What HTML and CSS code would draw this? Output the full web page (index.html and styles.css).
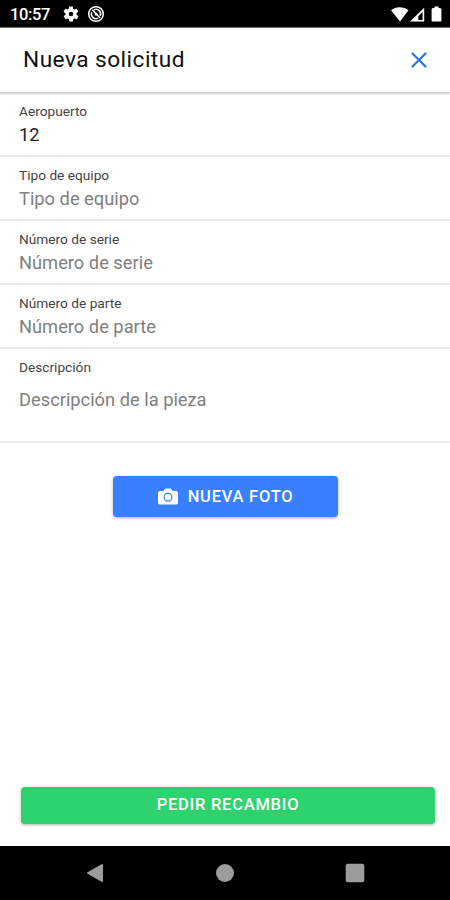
FILE: index.html
```
<!DOCTYPE html>
<html lang="es">
<head>
    <meta charset="UTF-8">
    <meta name="viewport" content="width=device-width, initial-scale=1.0">
    <title>Nueva solicitud</title>
    <link rel="stylesheet" href="styles.css">
</head>
<body>
    <div class="status-bar">
        <span class="clock">10:57</span>
        <svg class="gear" width="18" height="18" viewBox="0 0 24 24">
            <path fill="#fff" fill-rule="evenodd" d="M19.4 13a7.500 7.500 0 0 0 0-2l2.100-1.600a.5.5 0 0 0 .1-.6l-2-3.500a.5.5 0 0 0-.6-.2l-2.500 1a7.300 7.300 0 0 0-1.700-1l-.4-2.600a.5.5 0 0 0-.5-.5h-4a.5.5 0 0 0-.5.5l-.4 2.600a7.300 7.300 0 0 0-1.700 1l-2.500-1a.5.5 0 0 0-.6.200l-2 3.500a.5.5 0 0 0 .1.600L4.600 11a7.500 7.500 0 0 0 0 2l-2.100 1.600a.5.5 0 0 0-.1.600l2 3.500c.1.200.4.300.6.200l2.500-1a7.300 7.300 0 0 0 1.700 1l.4 2.600c0 .3.200.5.5.5h4c.3 0 .5-.2.5-.5l.4-2.600a7.300 7.300 0 0 0 1.700-1l2.500 1c.2.100.5 0 .6-.2l2-3.500a.5.5 0 0 0-.1-.6zM12 15a3 3 0 1 1 0-6 3 3 0 0 1 0 6z"/>
        </svg>
        <svg class="sync" width="18" height="18" viewBox="0 0 18 18" fill="none" stroke="#fff">
            <circle cx="9" cy="9" r="7.300" stroke-width="1.500"/>
            <path stroke-width="1.500" d="M5.200 4.800l8 8.200M6.900 4.900a4.600 4.600 0 0 1 6.300 6M4.700 7.300a4.600 4.600 0 0 0 6.300 5.800"/>
            <circle cx="9" cy="9" r="1.500" fill="#fff" stroke="none"/>
        </svg>
        <svg class="signals" width="54" height="18" viewBox="0 0 54 18">
            <path fill="#fff" d="M1 5.200C5.500 1.300 13.500 1.300 18.500 5.200L10 16.500z"/>
            <path fill="#fff" fill-rule="evenodd" d="M20 16.500L34.200 2.800v13.700zM28.300 11.200v3.900h4.300V6.800z"/>
            <path fill="#fff" d="M44.500 3V1.500h4V3h1.400q1.500 0 1.500 1.500v11q0 1-1 1h-7.800q-1 0-1-1v-11Q41.600 3 43.100 3z"/>
        </svg>
    </div>

    <header class="header">
        <h1>Nueva solicitud</h1>
        <button class="close" aria-label="Cerrar">
            <svg width="16" height="16" viewBox="0 0 16 16">
                <path d="M1.500 1.500l13 13M14.500 1.500l-13 13" stroke="#2b74f0" stroke-width="2.200" stroke-linecap="round"/>
            </svg>
        </button>
    </header>

    <main>
        <div class="item">
            <label for="aeropuerto">Aeropuerto</label>
            <input id="aeropuerto" type="text" value="12">
        </div>
        <div class="item">
            <label for="tipo">Tipo de equipo</label>
            <input id="tipo" type="text" placeholder="Tipo de equipo">
        </div>
        <div class="item">
            <label for="serie">Número de serie</label>
            <input id="serie" type="text" placeholder="Número de serie">
        </div>
        <div class="item">
            <label for="parte">Número de parte</label>
            <input id="parte" type="text" placeholder="Número de parte">
        </div>
        <div class="item item-area">
            <label for="descripcion">Descripción</label>
            <textarea id="descripcion" placeholder="Descripción de la pieza"></textarea>
        </div>
        <button class="btn photo">
            <svg width="20" height="17" viewBox="0 0 20 17">
                <path fill="#fff" d="M2 2.900h3.300L6.900.9Q7.300.4 8 .4h4.200q.6 0 1 .5l1.600 2H18q2 0 2 2v9.700q0 2-2 2H2q-2 0-2-2V4.900q0-2 2-2z"/>
                <circle cx="10" cy="9.200" r="3.900" fill="none" stroke="#3880ff" stroke-width="1.200"/>
            </svg>
            <span>NUEVA FOTO</span>
        </button>
    </main>

    <footer class="footer">
        <button class="btn send">PEDIR RECAMBIO</button>
    </footer>

    <nav class="nav-bar">
        <svg width="20" height="20" viewBox="0 0 20 20"><path fill="#9c9c9c" stroke="#9c9c9c" stroke-width="2" stroke-linejoin="round" d="M17 2v16L3 10z"/></svg>
        <svg width="20" height="20" viewBox="0 0 20 20"><circle cx="10" cy="10" r="9" fill="#9c9c9c"/></svg>
        <svg width="20" height="20" viewBox="0 0 20 20"><rect x=".7" y=".7" width="18.600" height="18.600" rx="2" fill="#9c9c9c"/></svg>
    </nav>
</body>
</html>
```
FILE: styles.css
```
* {
    box-sizing: border-box;
    margin: 0;
    padding: 0;
}

body {
    display: flex;
    flex-direction: column;
    height: 900px;
    font-family: Roboto, sans-serif;
    background-color: #fff;
    color: #111;
    overflow: hidden;
}

button {
    border: none;
    font-family: inherit;
    cursor: pointer;
}

.status-bar {
    display: flex;
    align-items: center;
    height: 28px;
    padding: 1px 6px 0 10px;
    background-color: #000;
    color: #fff;
    border-bottom: 1px solid #777;
}

.clock {
    width: 52px;
    font-size: 16.500px;
    font-weight: 500;
    letter-spacing: -0.4px;
}

.sync {
    margin-left: 7px;
}

.signals {
    margin-left: auto;
}

.header {
    display: flex;
    align-items: center;
    justify-content: space-between;
    height: 64px;
    padding: 0 22px 0 23px;
    box-shadow: 0 1px 2px 1px rgba(0, 0, 0, 0.2);
}

h1 {
    font-size: 22.700px;
    font-weight: 400;
    line-height: 26px;
    letter-spacing: 0.450px;
    margin-top: -1px;
}

.close {
    display: flex;
    padding: 1px;
    background: none;
}

main {
    flex: 1;
    padding-top: 1px;
}

.item {
    display: flex;
    flex-direction: column;
    height: 64px;
    padding: 10px 19px 0;
    border-bottom: 2px solid #ebebeb;
}

.item-area {
    height: 94px;
}

label {
    font-size: 13.700px;
    line-height: 16px;
    color: #444;
}

input,
textarea {
    width: 100%;
    border: none;
    outline: none;
    resize: none;
    background: none;
    font-family: inherit;
    font-size: 18.300px;
    line-height: 24px;
    height: 24px;
    margin-top: 4px;
    color: #222;
}

textarea {
    height: 50px;
    margin-top: 13px;
}

::placeholder {
    color: #808080;
}

.btn {
    display: flex;
    align-items: center;
    justify-content: center;
    border-radius: 4px;
    color: #fff;
    font-size: 16.500px;
    font-weight: 500;
    letter-spacing: 0.750px;
    box-shadow: 0 1px 3px rgba(0, 0, 0, 0.32);
}

.photo {
    gap: 10px;
    width: 225px;
    height: 41px;
    margin: 33px auto 0 113px;
    background-color: #3880ff;
}

.footer {
    padding: 0 15px 22px 21px;
}

.send {
    width: 100%;
    height: 37px;
    padding-bottom: 2px;
    background-color: #2dd36f;
}

.nav-bar {
    display: flex;
    justify-content: space-between;
    align-items: center;
    height: 54px;
    padding: 0 85px;
    background-color: #000;
}
```
